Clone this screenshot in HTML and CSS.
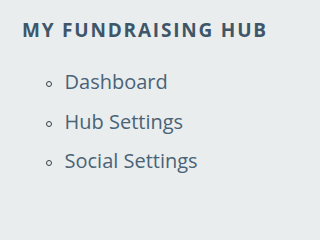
FILE: index.html
```html
<!DOCTYPE html>
<html>
<head>
<meta charset="utf-8">
<link rel="stylesheet" href="styles.css">
</head>
<body>
<nav class="hub">
  <h2 class="hub-title">MY FUNDRAISING HUB</h2>
  <ul class="hub-list">
    <li class="hub-item"><a class="hub-link" href="#">Dashboard</a></li>
    <li class="hub-item"><a class="hub-link" href="#">Hub Settings</a></li>
    <li class="hub-item"><a class="hub-link" href="#">Social Settings</a></li>
  </ul>
</nav>
</body>
</html>
```
FILE: styles.css
```css
html, body {
  margin: 0;
  padding: 0;
  background: #e9edee;
  height: 100%;
}
.hub {
  padding: 20px 0 0 22px;
  font-family: "Open Sans", "Liberation Sans", sans-serif;
}
.hub-title {
  margin: 0;
  font-size: 19px;
  line-height: 20px;
  font-weight: 700;
  letter-spacing: 1.8px;
  color: #3e5667;
}
.hub-list {
  list-style: none;
  margin: 32px 0 0 0;
  padding: 0;
  display: flex;
  flex-direction: column;
  gap: 19.5px;
}
.hub-item {
  display: flex;
  align-items: center;
  font-size: 20px;
  line-height: 20px;
}
.hub-item::before {
  content: "";
  width: 4px;
  height: 4px;
  border: 1.4px solid #33414b;
  border-radius: 50%;
  margin: 4px 13px 0 23.5px;
  flex: none;
}
.hub-link {
  color: #4a6376;
  text-decoration: none;
}
```
